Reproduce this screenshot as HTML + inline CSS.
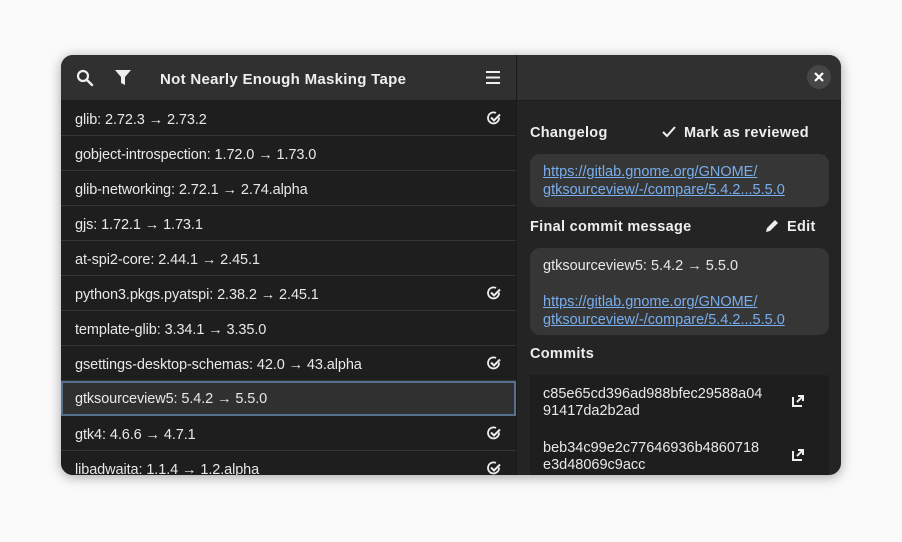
<!DOCTYPE html>
<html><head><style>
*{margin:0;padding:0;box-sizing:border-box}
body{width:902px;height:542px;background:#fafafa;font-family:"Liberation Sans","DejaVu Sans",sans-serif;color:#fff;position:relative;overflow:hidden}
.win{position:absolute;left:61px;top:55px;width:780px;height:420px;border-radius:12px;overflow:hidden;background:#242424;box-shadow:0 2px 12px rgba(0,0,0,.35)}
.hl{position:absolute;left:0;top:0;width:455px;height:46px;background:#303030;border-bottom:1px solid #1c1c1c}
.hr{position:absolute;left:456px;top:0;width:324px;height:46px;background:#303030;border-bottom:1px solid #1c1c1c}
.sep{position:absolute;left:455px;top:0;width:1px;height:420px;background:#1a1a1a}
.title{position:absolute;left:99px;top:16px;font-weight:bold;font-size:15px;letter-spacing:.3px;color:#eee}
.list{position:absolute;left:0;top:46px;width:455px;height:374px;background:#1e1e1e}
.row{height:35px;border-bottom:1px solid #343434;font-size:14.5px;line-height:34px;padding-top:2px;padding-left:14px;color:#e8e8e8;position:relative;letter-spacing:-.1px}
.row.sel{background:#303030;border:2px solid #56708c;line-height:31px;padding-top:1px;padding-left:12px}
.chk{position:absolute;right:15px;top:10px}
.lbl{position:absolute;font-weight:bold;font-size:14.5px;color:#eee;letter-spacing:.3px}
.card{position:absolute;left:469px;width:299px;background:#363636;border-radius:10px;font-size:14.5px;line-height:18px;padding:9px 13px}
a{color:#78aeed;text-decoration:underline}
.commits{position:absolute;left:469px;top:320px;width:299px;height:100px;background:#1e1e1e;font-size:14.5px;line-height:17px;color:#e8e8e8}
.c{position:absolute;left:13px}
</style></head><body>
<div class="win">
<div class="hl">
<svg style="position:absolute;left:15px;top:14px" width="18" height="18" viewBox="0 0 18 18"><circle cx="7" cy="7" r="5" fill="none" stroke="#eee" stroke-width="2.2"/><line x1="10.5" y1="10.5" x2="16" y2="16" stroke="#eee" stroke-width="2.4" stroke-linecap="round"/></svg>
<svg style="position:absolute;left:54px;top:14px" width="16" height="17" viewBox="0 0 16 17"><path d="M0 1h16l-6 7v8l-4-2v-6z" fill="#eee"/></svg>
<div class="title">Not Nearly Enough Masking Tape</div>
<svg style="position:absolute;left:425px;top:16px" width="14" height="13"><rect y="0" width="14" height="2" fill="#eee"/><rect y="5.5" width="14" height="2" fill="#eee"/><rect y="11" width="14" height="2" fill="#eee"/></svg>
</div>
<div class="hr"><div style="position:absolute;left:290px;top:10px;width:24px;height:24px;border-radius:12px;background:#464646"></div>
<svg style="position:absolute;left:297px;top:17px" width="10" height="10"><path d="M1 1L9 9M9 1L1 9" stroke="#fff" stroke-width="2.2"/></svg></div>
<div class="sep"></div>
<div class="list">
<div class="row">glib: 2.72.3 → 2.73.2<svg class="chk" width="14" height="14" viewBox="0 0 14 14"><path d="M12 6.5A5.5 5.5 0 1 1 9 2" fill="none" stroke="#eee" stroke-width="1.8"/><path d="M4 6.5l3 3 6-6" fill="none" stroke="#eee" stroke-width="2"/></svg></div>
<div class="row">gobject-introspection: 1.72.0 → 1.73.0</div>
<div class="row">glib-networking: 2.72.1 → 2.74.alpha</div>
<div class="row">gjs: 1.72.1 → 1.73.1</div>
<div class="row">at-spi2-core: 2.44.1 → 2.45.1</div>
<div class="row">python3.pkgs.pyatspi: 2.38.2 → 2.45.1<svg class="chk" width="14" height="14" viewBox="0 0 14 14"><path d="M12 6.5A5.5 5.5 0 1 1 9 2" fill="none" stroke="#eee" stroke-width="1.8"/><path d="M4 6.5l3 3 6-6" fill="none" stroke="#eee" stroke-width="2"/></svg></div>
<div class="row">template-glib: 3.34.1 → 3.35.0</div>
<div class="row">gsettings-desktop-schemas: 42.0 → 43.alpha<svg class="chk" width="14" height="14" viewBox="0 0 14 14"><path d="M12 6.5A5.5 5.5 0 1 1 9 2" fill="none" stroke="#eee" stroke-width="1.8"/><path d="M4 6.5l3 3 6-6" fill="none" stroke="#eee" stroke-width="2"/></svg></div>
<div class="row sel">gtksourceview5: 5.4.2 → 5.5.0</div>
<div class="row">gtk4: 4.6.6 → 4.7.1<svg class="chk" width="14" height="14" viewBox="0 0 14 14"><path d="M12 6.5A5.5 5.5 0 1 1 9 2" fill="none" stroke="#eee" stroke-width="1.8"/><path d="M4 6.5l3 3 6-6" fill="none" stroke="#eee" stroke-width="2"/></svg></div>
<div class="row">libadwaita: 1.1.4 → 1.2.alpha<svg class="chk" width="14" height="14" viewBox="0 0 14 14"><path d="M12 6.5A5.5 5.5 0 1 1 9 2" fill="none" stroke="#eee" stroke-width="1.8"/><path d="M4 6.5l3 3 6-6" fill="none" stroke="#eee" stroke-width="2"/></svg></div>
</div>
<div class="lbl" style="left:469px;top:70px">Changelog</div>
<svg style="position:absolute;left:601px;top:71px" width="14" height="12"><path d="M1 6l4 4 8-9" fill="none" stroke="#eee" stroke-width="2"/></svg>
<div class="lbl" style="left:623px;top:70px">Mark as reviewed</div>
<div class="card" style="top:99px;height:53px"><a>https://gitlab.gnome.org/GNOME/<br>gtksourceview/-/compare/5.4.2...5.5.0</a></div>
<div class="lbl" style="left:469px;top:164px">Final commit message</div>
<svg style="position:absolute;left:705px;top:164px" width="13" height="13"><path d="M0 13l1-4 8-8 3 3-8 8z" fill="#eee"/></svg>
<div class="lbl" style="left:726px;top:164px">Edit</div>
<div class="card" style="top:193px;height:87px;color:#e8e8e8">gtksourceview5: 5.4.2 → 5.5.0<br><br><a>https://gitlab.gnome.org/GNOME/<br>gtksourceview/-/compare/5.4.2...5.5.0</a></div>
<div class="lbl" style="left:469px;top:291px">Commits</div>
<div class="commits">
<div class="c" style="top:11px">c85e65cd396ad988bfec29588a04<br>91417da2b2ad</div>
<svg style="position:absolute;left:262px;top:20px" width="12" height="12"><path d="M1 2v9h9" fill="none" stroke="#eee" stroke-width="2"/><path d="M5 7l6-6M6 1h5v5" fill="none" stroke="#eee" stroke-width="2"/></svg>
<div class="c" style="top:65px">beb34c99e2c77646936b4860718<br>e3d48069c9acc</div>
<svg style="position:absolute;left:262px;top:74px" width="12" height="12"><path d="M1 2v9h9" fill="none" stroke="#eee" stroke-width="2"/><path d="M5 7l6-6M6 1h5v5" fill="none" stroke="#eee" stroke-width="2"/></svg>
</div>
</div>
</body></html>
